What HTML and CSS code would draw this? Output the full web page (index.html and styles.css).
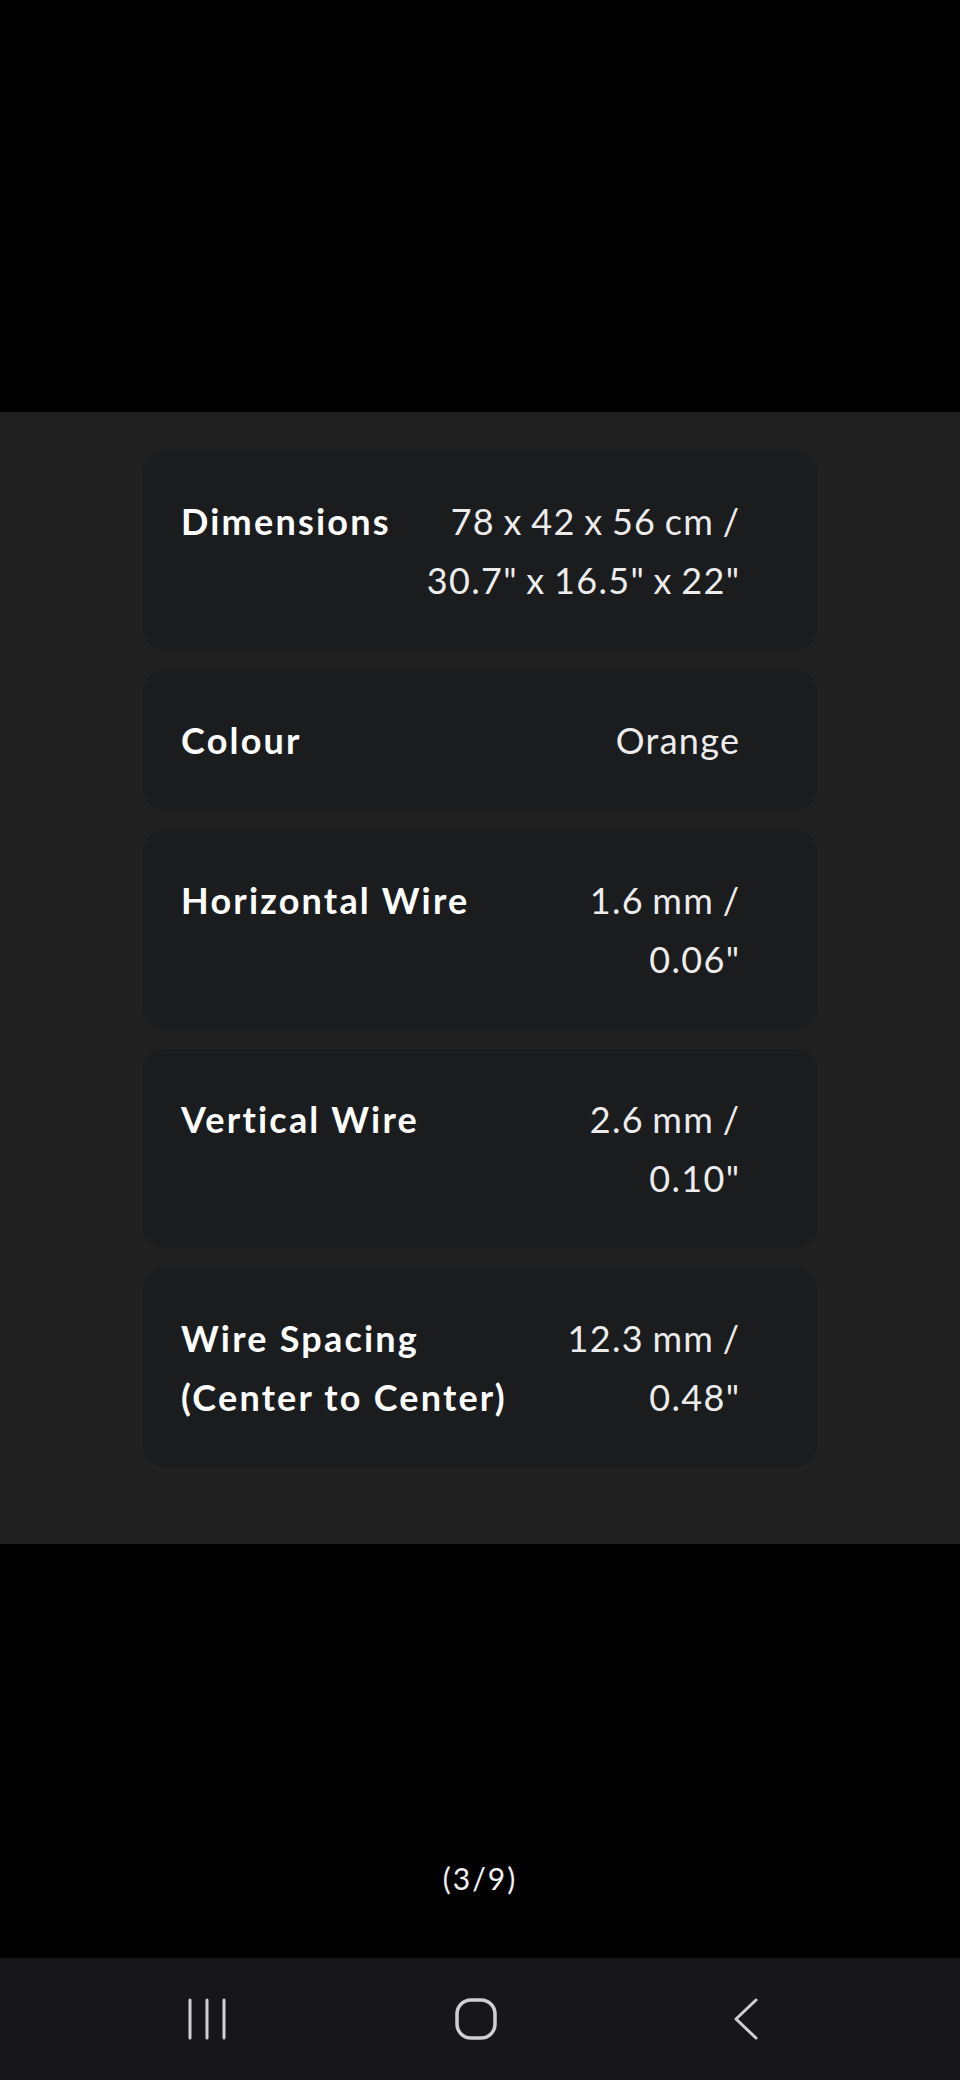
FILE: index.html
```html
<!DOCTYPE html>
<html lang="en">
<head>
  <meta charset="UTF-8">
  <meta name="viewport" content="width=device-width, initial-scale=1.0">
  <title>Specifications (3/9)</title>
  <link rel="stylesheet" href="styles.css">
</head>
<body>
  <div class="viewer">
    <div class="viewer-top"></div>

    <section class="specs">
      <div class="spec-card">
        <div class="spec-label">Dimensions</div>
        <div class="spec-value">78 x 42 x 56 cm /<br>30.7" x 16.5" x 22"</div>
      </div>
      <div class="spec-card">
        <div class="spec-label">Colour</div>
        <div class="spec-value">Orange</div>
      </div>
      <div class="spec-card">
        <div class="spec-label">Horizontal Wire</div>
        <div class="spec-value">1.6 mm /<br>0.06"</div>
      </div>
      <div class="spec-card">
        <div class="spec-label">Vertical Wire</div>
        <div class="spec-value">2.6 mm /<br>0.10"</div>
      </div>
      <div class="spec-card">
        <div class="spec-label">Wire Spacing<br>(Center to Center)</div>
        <div class="spec-value">12.3 mm /<br>0.48"</div>
      </div>
    </section>

    <div class="viewer-foot">
      <span class="counter">(3/9)</span>
    </div>
  </div>

  <nav class="navbar">
    <div class="nav-btn">
      <svg width="40" height="42" viewBox="0 0 40 42">
        <path d="M3 2v38M20 2v38M37 2v38" stroke="#cfcfcf" stroke-width="3" stroke-linecap="round" fill="none"/>
      </svg>
    </div>
    <div class="nav-btn">
      <svg width="44" height="44" viewBox="0 0 44 44">
        <rect x="3" y="3" width="38" height="38" rx="14" stroke="#cfcfcf" stroke-width="3.5" fill="none"/>
      </svg>
    </div>
    <div class="nav-btn">
      <svg width="30" height="44" viewBox="0 0 30 44">
        <path d="M26 3 L6 22 L26 41" stroke="#cfcfcf" stroke-width="3" stroke-linecap="round" stroke-linejoin="round" fill="none"/>
      </svg>
    </div>
  </nav>
</body>
</html>
```
FILE: styles.css
```css
/* full screen photo viewer, dark */
* {
  box-sizing: border-box;
}
body {
  margin: 0;
  background: #000;
  font-family: Lato, 'Noto Sans', sans-serif;
  color: #fff;
}
.viewer {
  display: flex;
  flex-direction: column;
  height: 1958px;
}
.viewer-top {
  height: 412px;
  flex-shrink: 0;
}
.specs {
  background-color: #202021;
  padding: 39px 143px 77px;
  display: flex;
  flex-direction: column;
  gap: 20px;
}
.spec-card {
  background-color: #1b1c1e;
  border-radius: 22px;
  padding: 41px 78px 40px 38px;
  display: flex;
  justify-content: space-between;
  align-items: flex-start;
  font-size: 36px;
  line-height: 59px;
}
.spec-label {
  font-weight: 700;
  color: #fff;
  letter-spacing: 2.2px;
}
.spec-value {
  font-weight: 400;
  color: #ececec;
  text-align: right;
  letter-spacing: 1.3px;
  word-spacing: -2px;
  margin-right: -1.3px;
}
.viewer-foot {
  flex: 1;
  display: flex;
  justify-content: center;
  align-items: flex-end;
  padding-bottom: 62px;
}
.counter {
  font-size: 30px;
  line-height: 36px;
  color: #f2f2f2;
  letter-spacing: 2px;
}
.navbar {
  height: 122px;
  background-color: #17171a;
  display: grid;
  grid-template-columns: repeat(3, 269px);
  justify-content: center;
  align-items: center;
  padding-right: 8px;
}
.nav-btn {
  display: flex;
  justify-content: center;
  align-items: center;
}
.nav-btn svg {
  display: block;
}
```
